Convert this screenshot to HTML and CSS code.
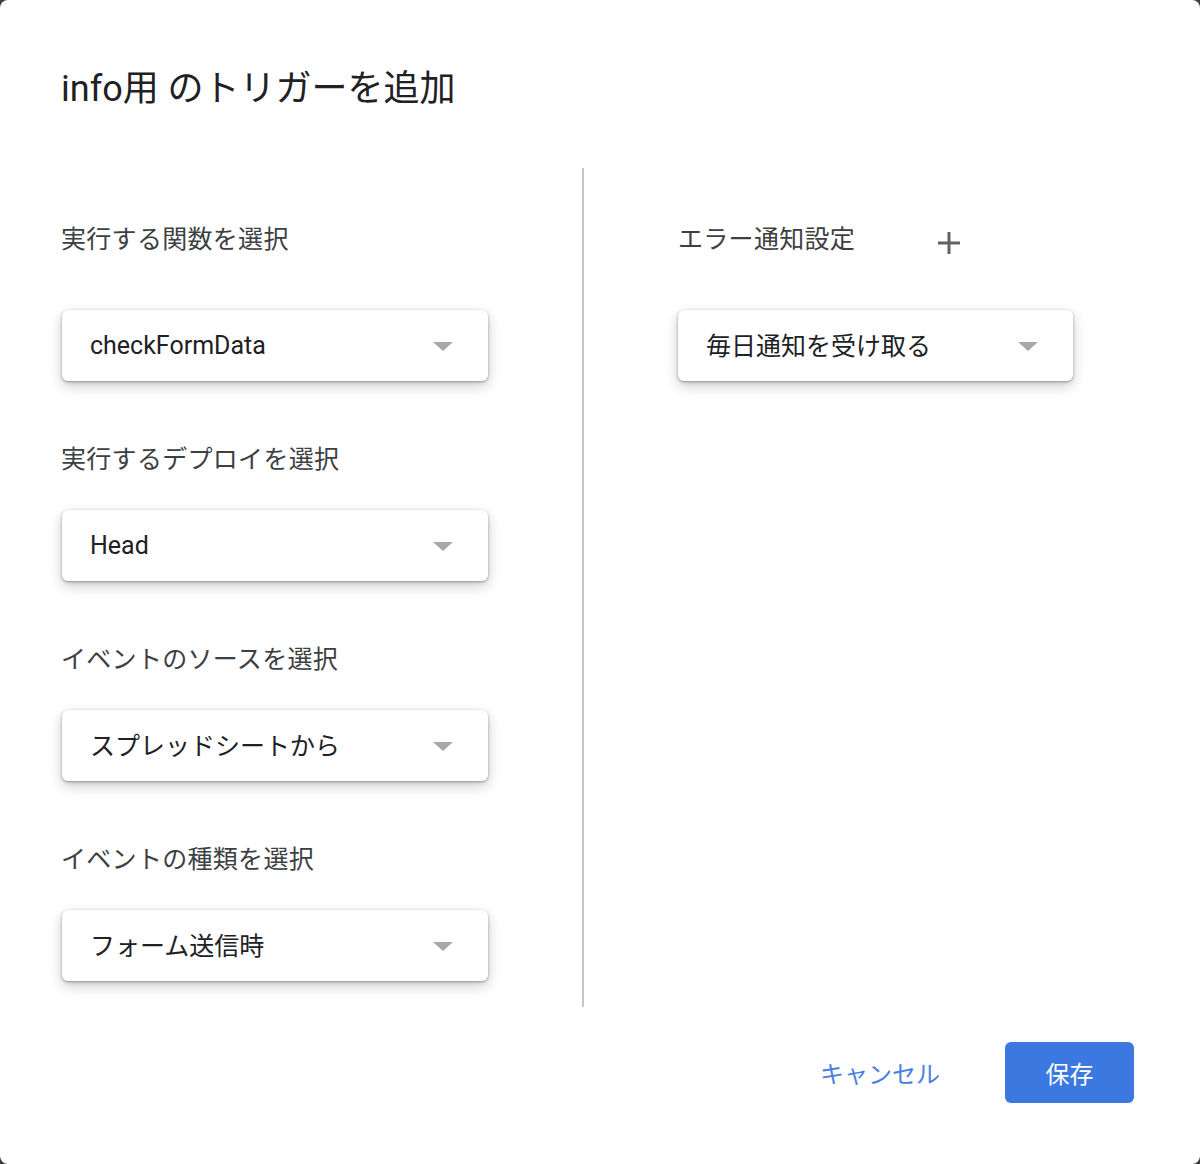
FILE: index.html
```html
<!DOCTYPE html>
<html lang="ja">
<head>
    <meta charset="UTF-8">
    <meta name="viewport" content="width=device-width, initial-scale=1.0">
    <title>info用 のトリガーを追加</title>
    <link rel="stylesheet" href="styles.css">
</head>
<body>

    <!-- Trigger dialog -->
    <div class="dialog">
        <h1 class="title">info用 のトリガーを追加</h1>

        <div class="dialog-body">
            <div class="col col-left">
                <div class="field">
                    <div class="label label-first">実行する関数を選択</div>
                    <div class="select select-wide">
                        <span>checkFormData</span>
                        <i class="arrow"></i>
                    </div>
                </div>
                <div class="field">
                    <div class="label">実行するデプロイを選択</div>
                    <div class="select select-wide">
                        <span>Head</span>
                        <i class="arrow"></i>
                    </div>
                </div>
                <div class="field">
                    <div class="label">イベントのソースを選択</div>
                    <div class="select select-wide">
                        <span class="jp">スプレッドシートから</span>
                        <i class="arrow"></i>
                    </div>
                </div>
                <div class="field">
                    <div class="label">イベントの種類を選択</div>
                    <div class="select select-wide">
                        <span class="jp">フォーム送信時</span>
                        <i class="arrow"></i>
                    </div>
                </div>
            </div>

            <div class="divider"></div>

            <div class="col col-right">
                <div class="field">
                    <div class="label-row label-first">
                        <div class="label">エラー通知設定</div>
                        <button class="add-btn" title="追加">
                            <svg width="24" height="24" viewBox="0 0 24 24">
                                <path d="M12 1v22M1 12h22" stroke="#5f6368" stroke-width="3" fill="none"/>
                            </svg>
                        </button>
                    </div>
                    <div class="select select-narrow">
                        <span class="jp">毎日通知を受け取る</span>
                        <i class="arrow"></i>
                    </div>
                </div>
            </div>
        </div>

        <div class="dialog-footer">
            <button class="btn-cancel">キャンセル</button>
            <button class="btn-save">保存</button>
        </div>
    </div>

</body>
</html>
```

FILE: styles.css
```css
/* Apps Script trigger dialog */
* { margin: 0; padding: 0; box-sizing: border-box; }
html { background: #3c3c3c; }
body { margin: 0; font-family: Roboto, "Noto Sans CJK JP", sans-serif; color: #202124; }

.dialog { background: #fff; min-height: 100vh; border-radius: 8px; padding: 68px 66px 0 61px; }
.title { font-size: 36px; font-weight: 400; line-height: 42px; color: #202124; margin-bottom: 58px; }

.dialog-body { display: flex; }
.col { padding: 56px 0 26px; }
.col-left { width: 521px; }
.col-right { padding-left: 94px; }
.divider { width: 2px; background: #c6c6ca; }

.field + .field { margin-top: 63px; }
.label { font-size: 25px; line-height: 32px; color: #3c4043; margin-bottom: 34px; letter-spacing: 0.3px; }
.label-first { margin-bottom: 54px; }
.label-row { display: flex; align-items: flex-start; height: 32px; }
.label-row .label { margin-bottom: 0; }

.add-btn { border: none; background: none; width: 48px; height: 32px; margin-left: 70px; margin-top: 3px; display: flex; align-items: center; justify-content: center; cursor: pointer; }

.select {
    height: 71px; display: flex; align-items: center; justify-content: space-between;
    padding: 0 35px 0 28px; background: #fff; border-radius: 6px;
    box-shadow: 0 1px 3px rgba(0,0,0,0.35), 0 5px 14px rgba(0,0,0,0.2);
    font-size: 25px; color: #202124; cursor: pointer;
}
.select .jp { margin-top: -4px; }
.select-wide { width: 426px; margin-left: 1px; }
.select-narrow { width: 395px; }
.arrow { width: 0; height: 0; border-left: 10px solid transparent; border-right: 10px solid transparent; border-top: 9px solid #a8a8a8; margin-top: 2px; }

.dialog-footer { display: flex; justify-content: flex-end; align-items: center; margin-top: 35px; padding-bottom: 61px; }
.btn-cancel { border: none; background: none; font-family: inherit; font-size: 24px; color: #4a80e3; height: 61px; padding: 0 16px; margin-right: 49px; cursor: pointer; }
.btn-save { border: none; background: #3b78e0; color: #fff; font-family: inherit; font-size: 24px; width: 129px; height: 61px; border-radius: 6px; cursor: pointer; }
```
